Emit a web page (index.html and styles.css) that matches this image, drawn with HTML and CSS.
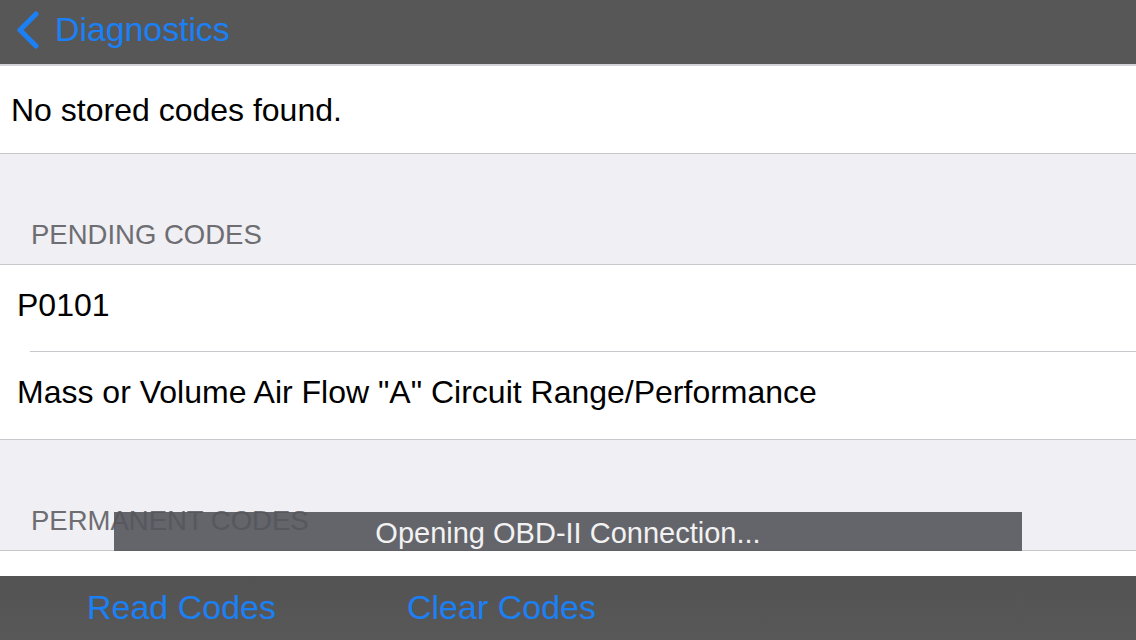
FILE: index.html
```html
<!DOCTYPE html>
<html>
<head>
<meta charset="utf-8">
<link rel="stylesheet" href="styles.css">
</head>
<body>
<div class="screen">
  <header class="navbar">
    <div class="back">
      <svg class="chevron" width="26" height="38" viewBox="0 0 26 38"><path d="M21 3 L5 19 L21 35" fill="none" stroke="#1b80f5" stroke-width="5" stroke-linecap="round" stroke-linejoin="round"/></svg>
      <span class="back-label">Diagnostics</span>
    </div>
  </header>
  <main class="content">
    <section class="group first">
      <div class="cell cell-first">No stored codes found.</div>
    </section>
    <div class="group-header">PENDING CODES</div>
    <section class="group">
      <div class="cell sep">P0101</div>
      <div class="cell">Mass or Volume Air Flow "A" Circuit Range/Performance</div>
    </section>
    <div class="group-header">PERMANENT CODES</div>
    <section class="group">
      <div class="cell"></div>
    </section>
  </main>
  <footer class="toolbar">
    <span class="tool tool-read">Read Codes</span>
    <span class="tool tool-clear">Clear Codes</span>
  </footer>
  <div class="toast">Opening OBD-II Connection...</div>
</div>
</body>
</html>
```
FILE: styles.css
```css
* { box-sizing: border-box; }
html, body { margin: 0; padding: 0; }
body {
  font-family: "Liberation Sans", Arial, sans-serif;
  background: #efeff4;
}
.screen {
  position: relative;
  width: 1136px;
  height: 640px;
  overflow: hidden;
  display: flex;
  flex-direction: column;
  background: #efeff4;
}
.navbar {
  height: 64px;
  flex: none;
  background: #575757;
  display: flex;
  align-items: center;
  padding-left: 15px;
}
.back {
  display: flex;
  align-items: center;
  gap: 14px;
  margin-top: -5px;
}
.chevron { display: block; }
.back-label {
  color: #1b80f5;
  font-size: 34px;
  letter-spacing: -0.1px;
}
.content {
  flex: 1;
  overflow: hidden;
}
.group {
  background: #fff;
  border-top: 1px solid #c8c7cc;
  border-bottom: 1px solid #c8c7cc;
}
.group.first {
  border-top: 2px solid #d4d4d8;
}
.cell {
  height: 87px;
  display: flex;
  align-items: center;
  padding-left: 17px;
  padding-bottom: 6px;
  font-size: 32px;
  color: #000;
  position: relative;
}
.cell-first {
  padding-left: 11px;
  padding-bottom: 0;
  padding-top: 2px;
  height: 87px;
}
.cell.sep::after {
  content: "";
  position: absolute;
  left: 30px;
  right: 0;
  bottom: 0;
  height: 1px;
  background: #c8c7cc;
}
.group-header {
  height: 110px;
  display: flex;
  align-items: flex-end;
  padding-left: 31px;
  padding-bottom: 13px;
  font-size: 27.5px;
  line-height: 32px;
  color: #6d6d72;
}
.toolbar {
  height: 64px;
  flex: none;
  background: linear-gradient(180deg, #535353 0%, #585858 100%);
  display: flex;
  align-items: center;
  padding-bottom: 1px;
}
.tool {
  color: #1b80f5;
  font-size: 34px;
}
.tool-read { margin-left: 87px; }
.tool-clear { margin-left: 131px; }
.toast {
  position: absolute;
  left: 114px;
  top: 512px;
  width: 908px;
  height: 39px;
  background: rgba(84, 84, 92, 0.9);
  color: #f2f2f2;
  font-size: 29px;
  display: flex;
  align-items: center;
  justify-content: center;
  padding-top: 4px;
}
```
